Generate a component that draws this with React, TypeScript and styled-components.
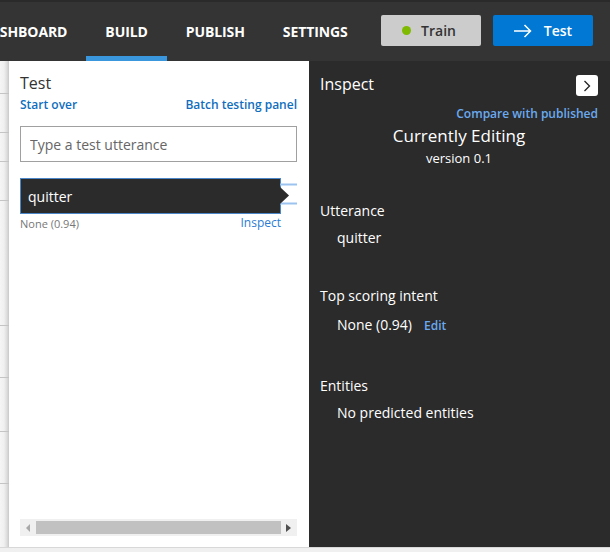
import React from "react";
import styled, { createGlobalStyle } from "styled-components";

const Global = createGlobalStyle`
  html, body { margin: 0; padding: 0; }
  body {
    width: 610px; height: 552px; overflow: hidden;
    background: #f0f0f0;
    font-family: "Open Sans", "Noto Sans", sans-serif;
  }
  * { box-sizing: border-box; }
`;

const Page = styled.div`
  width: 610px;
  height: 552px;
  display: flex;
  flex-direction: column;
  background: #f0f0f0;
`;

const Header = styled.header`
  height: 61px;
  flex: none;
  background: #343434;
  border-top: 2px solid #2a2a2a;
  display: flex;
  align-items: stretch;
  overflow: hidden;
`;

const Nav = styled.nav`
  display: flex;
  margin-left: -39px;
`;

const NavItem = styled.div<{ $active?: boolean }>`
  padding: 0 19px;
  display: flex;
  align-items: center;
  color: #ffffff;
  font-size: 14px;
  font-weight: 700;
  letter-spacing: -0.1px;
  border-bottom: 5px solid ${(p) => (p.$active ? "#3a96dd" : "transparent")};
  padding-top: 5px;
  white-space: nowrap;
`;

const Actions = styled.div`
  margin-left: auto;
  display: flex;
  align-items: center;
  gap: 12px;
  padding-right: 17px;
  padding-bottom: 2px;
`;

const Button = styled.div<{ $primary?: boolean }>`
  width: 100px;
  height: 31px;
  border-radius: 2px;
  display: flex;
  align-items: center;
  justify-content: center;
  gap: 10px;
  font-size: 14px;
  font-weight: 600;
  background: ${(p) => (p.$primary ? "#0078d4" : "#cccccc")};
  color: ${(p) => (p.$primary ? "#ffffff" : "#333333")};
`;

const Dot = styled.span`
  width: 9px;
  height: 9px;
  border-radius: 50%;
  background: #7fba00;
  margin-left: -4px;
`;

const Body = styled.div`
  flex: 1;
  display: flex;
  min-height: 0;
  border-bottom: 1px solid #d8d8d8;
  margin-bottom: 4px;
`;

const Backdrop = styled.div`
  width: 9px;
  flex: none;
  background: linear-gradient(to right, #f5f5f5 0px, #f0f0f0 4px, #dcdcdc 7px, #c8c8c8 9px);
  display: flex;
  flex-direction: column;
`;

const BackRow = styled.div<{ $h: number }>`
  height: ${(p) => p.$h}px;
  flex: none;
  border-bottom: 1px solid #c4c4c4;
`;

const TestPanel = styled.section`
  width: 300px;
  flex: none;
  background: #ffffff;
  display: flex;
  flex-direction: column;
  padding: 11px 12px 11px 11px;
`;

const PanelTitle = styled.h2<{ $dark?: boolean }>`
  margin: 0;
  font-size: 16px;
  font-weight: 400;
  line-height: 22px;
  color: ${(p) => (p.$dark ? "#ffffff" : "#333333")};
`;

const LinkRow = styled.div`
  display: flex;
  justify-content: space-between;
  margin-top: 2px;
`;

const Link = styled.a<{ $size?: number; $weight?: number; $color?: string }>`
  font-size: ${(p) => p.$size ?? 12}px;
  font-weight: ${(p) => p.$weight ?? 600};
  color: ${(p) => p.$color ?? "#106ebe"};
  text-decoration: none;
  line-height: 17px;
`;

const Input = styled.input`
  margin-top: 13px;
  height: 36px;
  width: 100%;
  border: 1px solid #a0a0a0;
  padding: 0 9px;
  font-family: inherit;
  font-size: 14px;
  color: #333;
  outline: none;
  &::placeholder { color: #666666; }
`;

const UtteranceRow = styled.div`
  margin-top: 16px;
  display: flex;
  align-items: center;
`;

const Utterance = styled.div`
  width: 261px;
  height: 36px;
  background: #2b2b2b;
  border: 1px solid #4a86c8;
  color: #ffffff;
  font-size: 14px;
  display: flex;
  align-items: center;
  padding-left: 7px;
`;

const Pointer = styled.svg`
  flex: none;
  display: block;
  margin-left: -1px;
`;

const ResultRow = styled.div`
  display: flex;
  justify-content: space-between;
  width: 261px;
  margin-top: 0px;
`;

const Score = styled.span`
  font-size: 11px;
  color: #777777;
  line-height: 16px;
  margin-top: 2px;
`;

const Spacer = styled.div`
  flex: 1;
`;

const Scrollbar = styled.div`
  height: 17px;
  background: #f0f0f0;
  display: flex;
  align-items: center;
  padding: 0 6px 0 6px;
  gap: 5px;
`;

const Thumb = styled.div`
  flex: 1;
  height: 13px;
  background: #c1c1c1;
`;

const InspectPanel = styled.section`
  flex: 1;
  background: #2b2b2b;
  color: #ffffff;
  display: flex;
  flex-direction: column;
  padding: 11px 12px 0 11px;
`;

const InspectHead = styled.div`
  display: flex;
  justify-content: space-between;
  align-items: center;
`;

const Collapse = styled.div`
  width: 22px;
  height: 21px;
  background: #ffffff;
  border-radius: 3px;
  display: flex;
  align-items: center;
  justify-content: center;
  margin-top: 3px;
`;

const CompareRow = styled.div`
  display: flex;
  justify-content: flex-end;
  margin-top: 9px;
`;

const Current = styled.div`
  text-align: center;
  font-size: 17px;
  line-height: 22px;
  margin-top: 3px;
`;

const Version = styled.div`
  text-align: center;
  font-size: 13px;
  line-height: 18px;
  margin-top: 2px;
`;

const Section = styled.div<{ $top: number }>`
  margin-top: ${(p) => p.$top}px;
`;

const SectionTitle = styled.div`
  font-size: 14px;
  line-height: 20px;
`;

const SectionValue = styled.div<{ $gap?: number }>`
  font-size: 14px;
  line-height: 20px;
  margin-top: ${(p) => p.$gap ?? 7}px;
  padding-left: 17px;
  display: flex;
  align-items: baseline;
  gap: 12px;
`;

const rows = [33, 39, 29, 39, 125, 52, 54, 52];

export default function App() {
  return (
    <>
      <Global />
      <Page>
        <Header>
          <Nav>
            <NavItem>DASHBOARD</NavItem>
            <NavItem $active>BUILD</NavItem>
            <NavItem>PUBLISH</NavItem>
            <NavItem>SETTINGS</NavItem>
          </Nav>
          <Actions>
            <Button>
              <Dot />
              Train
            </Button>
            <Button $primary>
              <svg width="18" height="14" viewBox="0 0 18 14" fill="none" stroke="#fff" strokeWidth="1.5">
                <path d="M0 7 H16.5 M10.5 1 L16.5 7 L10.5 13" />
              </svg>
              <span style={{ marginLeft: 2 }}>Test</span>
            </Button>
          </Actions>
        </Header>
        <Body>
          <Backdrop>
            {rows.map((h, i) => (
              <BackRow key={i} $h={h} />
            ))}
          </Backdrop>
          <TestPanel>
            <PanelTitle>Test</PanelTitle>
            <LinkRow>
              <Link href="#">Start over</Link>
              <Link href="#">Batch testing panel</Link>
            </LinkRow>
            <Input placeholder="Type a test utterance" />
            <UtteranceRow>
              <Utterance>quitter</Utterance>
              <Pointer width="17" height="36" viewBox="0 0 17 36">
                <path d="M0 6.5 H17 M0 25.5 H17" stroke="#9cc3ef" strokeWidth="2" />
                <path d="M0 9 L9 17.5 L0 26 Z" fill="#2b2b2b" />
              </Pointer>
            </UtteranceRow>
            <ResultRow>
              <Score>None (0.94)</Score>
              <Link href="#" $weight={400} $color="#2b7cd3">Inspect</Link>
            </ResultRow>
            <Spacer />
            <Scrollbar>
              <svg width="5" height="8" viewBox="0 0 5 8"><path d="M4 0 L0 4 L4 8 Z" fill="#a8a8a8" /></svg>
              <Thumb />
              <svg width="5" height="8" viewBox="0 0 5 8"><path d="M0 0 L5 4 L0 8 Z" fill="#505050" /></svg>
            </Scrollbar>
          </TestPanel>
          <InspectPanel>
            <InspectHead>
              <PanelTitle $dark>Inspect</PanelTitle>
              <Collapse>
                <svg width="8" height="12" viewBox="0 0 8 12" fill="none" stroke="#222" strokeWidth="1.3">
                  <path d="M1.5 1 L6.5 6 L1.5 11" />
                </svg>
              </Collapse>
            </InspectHead>
            <CompareRow>
              <Link href="#" $color="#6aaaf0">Compare with published</Link>
            </CompareRow>
            <Current>Currently Editing</Current>
            <Version>version 0.1</Version>
            <Section $top={34}>
              <SectionTitle>Utterance</SectionTitle>
              <SectionValue>quitter</SectionValue>
            </Section>
            <Section $top={38}>
              <SectionTitle>Top scoring intent</SectionTitle>
              <SectionValue $gap={9}>
                None (0.94)
                <Link href="#" $color="#6aaaf0">Edit</Link>
              </SectionValue>
            </Section>
            <Section $top={41}>
              <SectionTitle>Entities</SectionTitle>
              <SectionValue>No predicted entities</SectionValue>
            </Section>
          </InspectPanel>
        </Body>
      </Page>
    </>
  );
}
